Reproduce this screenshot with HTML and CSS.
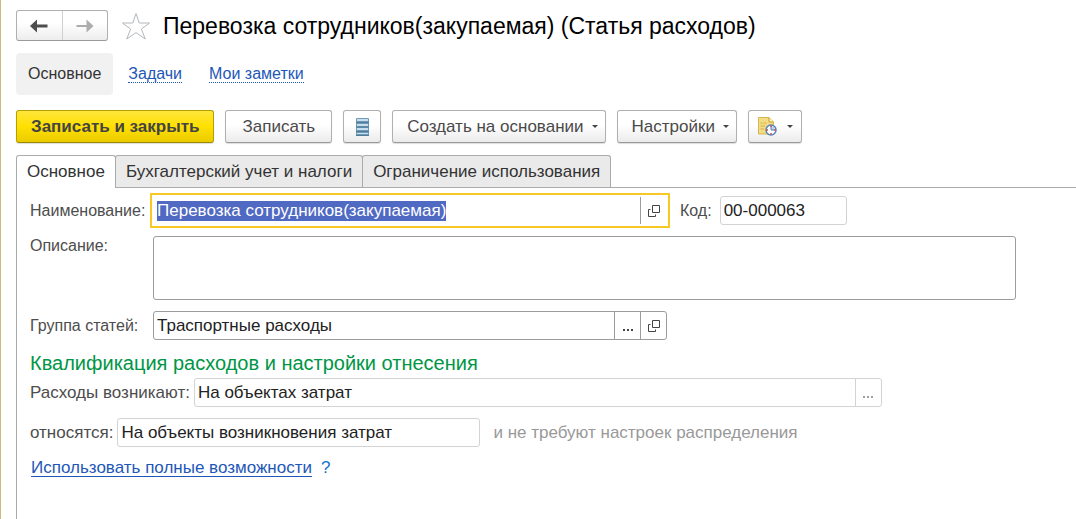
FILE: index.html
```html
<!DOCTYPE html>
<html lang="ru">
<head>
<meta charset="utf-8">
<meta name="viewport" content="width=device-width, initial-scale=1">
<title>Перевозка сотрудников(закупаемая) (Статья расходов)</title>
<link rel="stylesheet" href="styles.css">
</head>
<body>
<main class="window">
  <header class="titlebar">
    <div class="history">
      <button class="history-btn" type="button" aria-label="Назад">
        <svg width="18" height="14" viewBox="0 0 18 14"><path d="M0 7 7 0.500V5.500H17.500V8.500H7V13.500Z" fill="#4d4d4d"/></svg>
      </button>
      <button class="history-btn" type="button" aria-label="Вперед" disabled>
        <svg width="18" height="14" viewBox="0 0 18 14"><path d="M17.500 7 10.500 0.500V6H0.500V8H10.500V13.500Z" fill="#adadad"/></svg>
      </button>
    </div>
    <button class="star" type="button" aria-label="Добавить в избранное">
      <svg width="30" height="28" viewBox="0 0 30 28"><path d="M15 1.500 18.200 11H28.500L20.400 17.100 24.300 27 15 20.600 5.700 27 9.600 17.100 1.500 11H11.800Z" fill="#fff" stroke="#b3b7bd"/></svg>
    </button>
    <h1 class="title">Перевозка сотрудников(закупаемая) (Статья расходов)</h1>
  </header>

  <nav class="sections">
    <span class="section-current">Основное</span>
    <a class="section-link" href="#tasks">Задачи</a>
    <a class="section-link" href="#notes">Мои заметки</a>
  </nav>

  <div class="toolbar">
    <button class="btn btn-primary" type="button">Записать и закрыть</button>
    <button class="btn" type="button">Записать</button>
    <button class="btn btn-icon" type="button" aria-label="Журнал">
      <svg width="13" height="18" viewBox="0 0 13 18">
        <rect width="13" height="18" rx="1" fill="#6f99b6"/>
        <path d="M1 1H12V3H1ZM1 6H12V8H1ZM1 10H12V12H1ZM1 15H12V16H1Z" fill="#c9dfed"/>
        <path d="M0 4.500H13M0 9H13M0 13.500H13M0 17.500H13" stroke="#4f7c9b"/>
      </svg>
    </button>
    <button class="btn btn-menu" type="button">Создать на основании<span class="caret"></span></button>
    <button class="btn btn-menu" type="button">Настройки<span class="caret"></span></button>
    <button class="btn btn-reminder" type="button" aria-label="Напоминания">
      <svg width="19" height="19" viewBox="0 0 19 19">
        <path d="M0.500 0.500H11L15.500 5V17H0.500Z" fill="#f3dc83" stroke="#d5b552"/>
        <path d="M11 0.500V5H15.500" fill="#fff0b0" stroke="#c59f38"/>
        <path d="M2.500 6H4.500M5.500 6H8.500M2.500 9H7M2.500 12H6" stroke="#d0ae4b"/>
        <circle cx="13" cy="13" r="5" fill="#fff" stroke="#5484ba" stroke-width="1.500"/>
        <path d="M13 13V9.200A3.800 3.800 0 0 1 16.800 13Z" fill="#b8d3ee"/>
        <path d="M13 9V13H16" fill="none" stroke="#5484ba"/>
        <path d="M12.300 8.500H13.700V10H12.300ZM12.300 16H13.700V17.500H12.300ZM8.500 12.300H10V13.700H8.500ZM16 12.300H17.500V13.700H16Z" fill="#df3c3c"/>
      </svg>
      <span class="caret"></span>
    </button>
  </div>

  <div class="tabs" role="tablist">
    <button class="tab tab-active" type="button" role="tab" aria-selected="true">Основное</button>
    <button class="tab" type="button" role="tab" aria-selected="false">Бухгалтерский учет и налоги</button>
    <button class="tab" type="button" role="tab" aria-selected="false">Ограничение использования</button>
  </div>

  <form class="panel">
    <div class="row">
      <label class="label label-column" for="name">Наименование:</label>
      <div class="field field-main field-name">
        <input class="input" id="name" type="text" value="Перевозка сотрудников(закупаемая)">
        <button class="field-btn" type="button" aria-label="Открыть">
          <svg width="12" height="12" viewBox="0 0 12 12"><path d="M4.500 0.500H11.500V7.500H4.500ZM2.500 4.500H0.500V11.500H7.500V9.500" fill="none" stroke="#444"/></svg>
        </button>
      </div>
      <label class="label label-code" for="code">Код:</label>
      <div class="field field-locked field-code">
        <input class="input" id="code" type="text" value="00-000063" readonly>
      </div>
    </div>

    <div class="row row-top">
      <label class="label label-column" for="description">Описание:</label>
      <textarea class="textarea" id="description"></textarea>
    </div>

    <div class="row">
      <label class="label label-column" for="group">Группа статей:</label>
      <div class="field field-main">
        <input class="input" id="group" type="text" value="Траспортные расходы">
        <button class="field-btn" type="button" aria-label="Выбрать">
          <svg width="10" height="12" viewBox="0 0 10 12"><path d="M0 9H2V11H0ZM4 9H6V11H4ZM8 9H10V11H8Z" fill="#444"/></svg>
        </button>
        <button class="field-btn" type="button" aria-label="Открыть">
          <svg width="12" height="12" viewBox="0 0 12 12"><path d="M4.500 0.500H11.500V7.500H4.500ZM2.500 4.500H0.500V11.500H7.500V9.500" fill="none" stroke="#444"/></svg>
        </button>
      </div>
    </div>

    <section class="group">
      <h2 class="group-title">Квалификация расходов и настройки отнесения</h2>
      <div class="row">
        <label class="label" for="arise">Расходы возникают:</label>
        <div class="field field-locked field-arise">
          <input class="input" id="arise" type="text" value="На объектах затрат" readonly>
          <button class="field-btn" type="button" aria-label="Выбрать" disabled>
            <svg width="10" height="12" viewBox="0 0 10 12"><path d="M0 9H2V11H0ZM4 9H6V11H4ZM8 9H10V11H8Z" fill="#a0a0a0"/></svg>
          </button>
        </div>
      </div>
    </section>

    <div class="row">
      <label class="label" for="assign">относятся:</label>
      <div class="field field-locked field-assign">
        <input class="input" id="assign" type="text" value="На объекты возникновения затрат" readonly>
      </div>
      <span class="note">и не требуют настроек распределения</span>
    </div>

    <div class="row row-links">
      <a class="full-link" href="#full">Использовать полные возможности</a>
      <a class="help" href="#help">?</a>
    </div>
  </form>
</main>
<script src="script.js"></script>
</body>
</html>
```

FILE: styles.css
```css
* {
  box-sizing: border-box;
}

body {
  margin: 0;
  background: #fff;
  color: #333;
  font: 17px/20px "Liberation Sans", Arial, sans-serif;
}

button,
input,
textarea {
  margin: 0;
  font: inherit;
  color: inherit;
}

button {
  padding: 0;
}

svg {
  display: block;
  flex: none;
}

.window {
  display: flex;
  flex-direction: column;
  min-height: 100vh;
  padding: 10px 0 0 15px;
  border-left: 1px solid #cdbb7d;
}

.titlebar {
  display: flex;
  align-items: center;
  height: 31px;
}

.history {
  display: flex;
  width: 92px;
  height: 31px;
  border: 1px solid #b0b0b0;
  border-bottom-color: #999;
  border-radius: 3px;
  background: linear-gradient(#fff 40%, #ededed);
}

.history-btn {
  display: flex;
  flex: 1;
  align-items: center;
  justify-content: center;
  border: 0;
  background: none;
}

.history-btn + .history-btn {
  border-left: 1px solid #d0d0d0;
}

.star {
  margin: 0 12px 0 13px;
  border: 0;
  background: none;
}

.title {
  margin: 0;
  color: #000;
  font-size: 23px;
  font-weight: 400;
  line-height: 28px;
  white-space: nowrap;
}

.sections {
  display: flex;
  align-items: center;
  gap: 27px;
  margin-top: 12px;
  font-size: 16px;
}

.section-current {
  margin-right: -12px;
  padding: 11px 12px;
  border-radius: 4px;
  background: #f1f1f1;
}

.section-link {
  border-bottom: 1px dotted #1e57b8;
  color: #1e57b8;
  line-height: 17px;
  text-decoration: none;
}

.toolbar {
  display: flex;
  gap: 11px;
  margin-top: 15px;
}

.btn {
  display: flex;
  align-items: center;
  justify-content: center;
  height: 33px;
  padding: 0 16px;
  border: 1px solid #b0b0b0;
  border-bottom-color: #999;
  border-radius: 3px;
  background: linear-gradient(#fff 45%, #ebebeb);
  box-shadow: 0 1px 1px #ddd;
  color: #4a4a4a;
  white-space: nowrap;
}

.btn-primary {
  padding: 0 14px;
  border-color: #b5a000;
  border-bottom-color: #9c8900;
  background: linear-gradient(#ffe63c, #ffe000 50%, #eacb00);
  color: #444;
  font-weight: 700;
}

.btn-icon {
  width: 38px;
  padding: 0;
}

.btn-menu {
  gap: 8px;
  padding: 0 7px 0 14px;
}

.btn-reminder {
  gap: 10px;
  padding: 0 8px 0 9px;
}

.caret {
  border: 3px solid transparent;
  border-top-color: #444;
  border-bottom: 0;
}

.tabs {
  display: flex;
  margin-top: 12px;
  border-bottom: 1px solid #ababab;
}

.tab {
  height: 32px;
  padding: 0 10px;
  border: 1px solid #ababab;
  border-bottom: 0;
  border-radius: 3px 3px 0 0;
  background: #eaeaea;
  white-space: nowrap;
}

.tab + .tab {
  margin-left: -1px;
}

.tab-active {
  height: 33px;
  margin-bottom: -1px;
  background: #fff;
}

.panel {
  display: flex;
  flex: 1;
  flex-direction: column;
  gap: 11px;
  padding: 8px 60px 16px 13px;
  border-left: 1px solid #ababab;
}

.row {
  display: flex;
  align-items: center;
}

.row-top {
  align-items: flex-start;
}

.label {
  flex: none;
  margin-right: 4px;
  color: #4d4d4d;
  white-space: nowrap;
}

.label-column {
  width: 123px;
  margin-right: 0;
  font-size: 16px;
}

.label-code {
  margin: 0 8px 0 13px;
  font-size: 16px;
}

.field {
  display: flex;
  min-width: 0;
  height: 29px;
  border: 1px solid #9c9c9c;
  border-radius: 3px;
}

.field-main {
  flex: 0 1 514px;
}

.field-name {
  border-color: transparent;
  border-radius: 0;
  outline: 2px solid #f9c923;
  outline-offset: 1px;
}

.field-locked {
  border-color: #d3d3d3;
}

.field-code {
  flex: 0 1 127px;
}

.field-arise {
  flex: 0 1 688px;
}

.field-assign {
  flex: 0 1 363px;
}

.input {
  flex: 1;
  min-width: 0;
  padding: 0 3px;
  border: 0;
  outline: 0;
  background: none;
  color: #222;
}

.input::selection {
  background: #5069c3;
  color: #fff;
}

.field-btn {
  display: flex;
  flex: none;
  align-items: center;
  justify-content: center;
  width: 26px;
  border: 0;
  border-left: 1px solid #9c9c9c;
  background: none;
}

.field-locked .field-btn {
  border-color: #d3d3d3;
}

.textarea {
  flex: 1;
  height: 64px;
  padding: 4px 3px;
  border: 1px solid #9c9c9c;
  border-radius: 3px;
  outline: 0;
  resize: none;
}

.group-title {
  margin: 0 0 3px;
  color: #009646;
  font-size: 20px;
  font-weight: 400;
  line-height: 24px;
}

.note {
  margin-left: 13px;
  color: #999;
  white-space: nowrap;
}

.row-links {
  gap: 9px;
  padding-left: 1px;
}

.full-link {
  border-bottom: 1px solid #1e57b8;
  color: #1e57b8;
  line-height: 17px;
  text-decoration: none;
}

.help {
  color: #0f74c4;
  text-decoration: none;
}
```

FILE: script.js
```js
const nameInput = document.getElementById("name");
nameInput.focus();
nameInput.select();
```
